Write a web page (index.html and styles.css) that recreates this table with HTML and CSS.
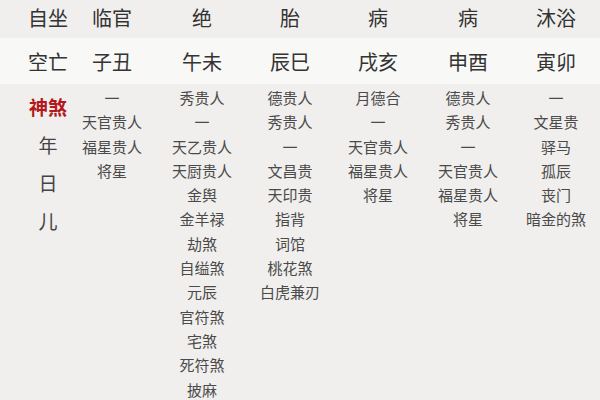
FILE: index.html
```html
<!DOCTYPE html>
<html lang="zh">
<head>
<meta charset="utf-8">
<link rel="stylesheet" href="styles.css">
</head>
<body>
<div class="table">
  <div class="row head">
    <div class="cell">自坐</div>
    <div class="cell">临官</div>
    <div class="cell">绝</div>
    <div class="cell">胎</div>
    <div class="cell">病</div>
    <div class="cell">病</div>
    <div class="cell">沐浴</div>
  </div>
  <div class="row band">
    <div class="cell">空亡</div>
    <div class="cell">子丑</div>
    <div class="cell">午未</div>
    <div class="cell">辰巳</div>
    <div class="cell">戌亥</div>
    <div class="cell">申酉</div>
    <div class="cell">寅卯</div>
  </div>
  <div class="row body">
    <div class="cell labels">
      <div class="red">神煞</div>
      <div>年</div>
      <div>日</div>
      <div>儿</div>
    </div>
    <div class="cell list">
      <div>一</div><div>天官贵人</div><div>福星贵人</div><div>将星</div>
    </div>
    <div class="cell list">
      <div>秀贵人</div><div>一</div><div>天乙贵人</div><div>天厨贵人</div><div>金舆</div><div>金羊禄</div><div>劫煞</div><div>自缢煞</div><div>元辰</div><div>官符煞</div><div>宅煞</div><div>死符煞</div><div>披麻</div>
    </div>
    <div class="cell list">
      <div>德贵人</div><div>秀贵人</div><div>一</div><div>文昌贵</div><div>天印贵</div><div>指背</div><div>词馆</div><div>桃花煞</div><div>白虎兼刃</div>
    </div>
    <div class="cell list">
      <div>月德合</div><div>一</div><div>天官贵人</div><div>福星贵人</div><div>将星</div>
    </div>
    <div class="cell list">
      <div>德贵人</div><div>秀贵人</div><div>一</div><div>天官贵人</div><div>福星贵人</div><div>将星</div>
    </div>
    <div class="cell list">
      <div>一</div><div>文星贵</div><div>驿马</div><div>孤辰</div><div>丧门</div><div>暗金的煞</div>
    </div>
  </div>
</div>
</body>
</html>
```

FILE: styles.css
```css
html, body {
  margin: 0;
  padding: 0;
  width: 600px;
  height: 400px;
  overflow: hidden;
  background: #f0efed;
}
.table {
  font-family: "Noto Sans CJK SC", "Noto Sans", sans-serif;
  color: #333;
  width: 612px;
}
.row {
  display: grid;
  grid-template-columns: 64px 64px 116px 60px 116px 64px 112px;
  padding-left: 16px;
}
.cell {
  text-align: center;
  white-space: nowrap;
}
.head {
  height: 38px;
  line-height: 36px;
  font-size: 20px;
}
.band {
  height: 46px;
  line-height: 48px;
  font-size: 20px;
  background: #f8f8f6;
}
.body {
  padding-top: 2px;
}
.labels {
  font-size: 19px;
  line-height: 38px;
  color: #444;
  padding-top: 2px;
}
.labels .red {
  color: #b3191c;
  font-weight: bold;
}
.list {
  font-size: 15px;
  line-height: 24.3px;
  color: #4a4a4a;
}
```
